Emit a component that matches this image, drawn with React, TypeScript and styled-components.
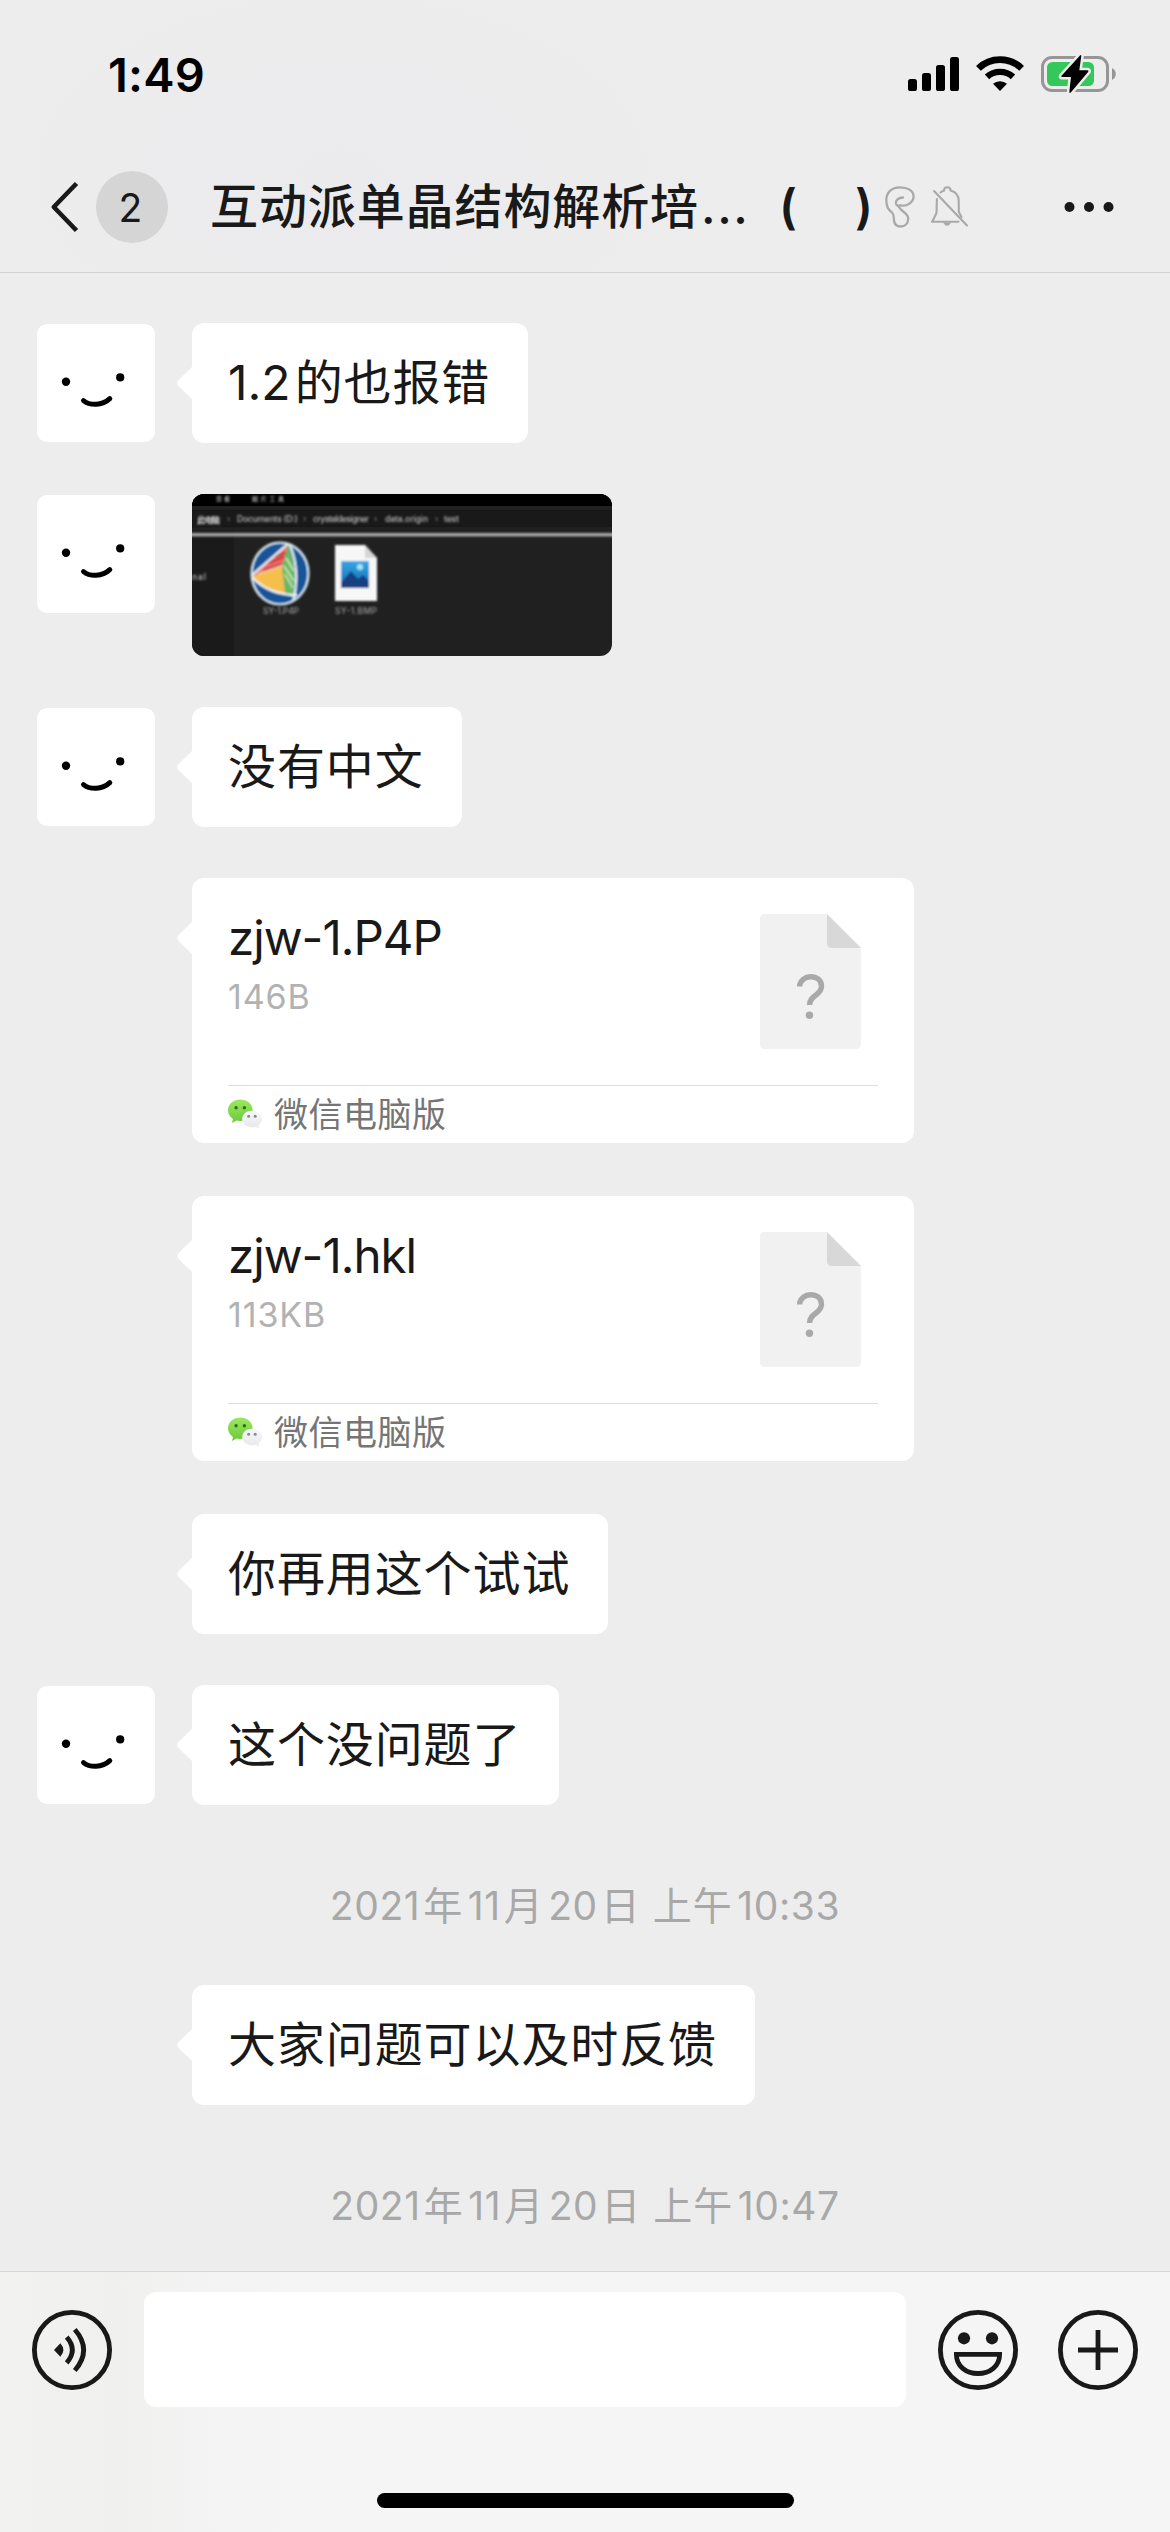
import React from "react";
import styled, { createGlobalStyle } from "styled-components";

const GlobalStyle = createGlobalStyle`
  * { box-sizing: border-box; }
  body {
    margin: 0;
    background: #ededed;
    font-family: Inter, "Noto Sans CJK SC", sans-serif;
    color: #191919;
  }
  svg { display: block; flex: none; }
`;

const Screen = styled.div`
  width: 1170px;
  height: 2532px;
  display: flex;
  flex-direction: column;
  overflow: hidden;
  background: #ededed;
`;

const Header = styled.header`
  height: 273px;
  flex: none;
  border-bottom: 1px solid #d3d3d3;
  background: radial-gradient(ellipse 420px 240px at 340px 170px, #ebebed 0%, #ededed 100%);
`;

const StatusBar = styled.div`
  height: 148px;
  display: flex;
  justify-content: space-between;
  padding: 0 54px 0 108px;
`;

const Clock = styled.span`
  padding-top: 46px;
  font-size: 47px;
  line-height: 58px;
  font-weight: 600;
  letter-spacing: 0.2px;
  color: #000;
`;

const StatusIcons = styled.div`
  display: flex;
  padding-top: 54px;
`;

const NavBar = styled.div`
  height: 118px;
  display: flex;
  align-items: center;
  padding: 0 56px 0 48px;
`;

const BackBadge = styled.span`
  width: 72px;
  height: 72px;
  margin-left: 16px;
  padding-right: 3px;
  border-radius: 50%;
  background: #d5d5d5;
  font-size: 39px;
  line-height: 73px;
  text-align: center;
`;

const Title = styled.h1`
  margin: 0 12px 0 42px;
  display: flex;
  font-size: 48px;
  line-height: 70px;
  font-weight: 500;
  white-space: pre;
`;

const TitlePart = styled.span<{ $width: number; $spacing?: number; $weight?: number }>`
  width: ${(p) => p.$width}px;
  letter-spacing: ${(p) => p.$spacing ?? 0.9}px;
  font-weight: ${(p) => p.$weight ?? 500};
  flex: none;
`;

const NavSpacer = styled.div`
  flex: 1;
`;

const Chat = styled.main`
  flex: 1;
  min-height: 0;
  display: flex;
  flex-direction: column;
  padding: 50px 36px 0;
`;

const Row = styled.div<{ $gap?: number }>`
  flex: none;
  display: flex;
  align-items: flex-start;
  margin-bottom: ${(p) => p.$gap ?? 51}px;
`;

const AvatarSlot = styled.div`
  width: 156px;
  flex: none;
  padding: 1px 0 0 1px;
`;

const AvatarBox = styled.div`
  width: 118px;
  height: 118px;
  border-radius: 10px;
  background: #fff;
`;

const Bubble = styled.div`
  position: relative;
  border-radius: 12px;
  background: #fff;
`;

const Tail = styled.svg`
  position: absolute;
  left: -15px;
  top: 42px;
`;

const TextBubble = styled(Bubble)`
  height: 120px;
  padding: 0 38px 0 36px;
  font-size: 48px;
  line-height: 119px;
  letter-spacing: 0.9px;
  white-space: nowrap;
`;

const Latin = styled.span<{ $spacing: number; $before: number; $after: number }>`
  letter-spacing: ${(p) => p.$spacing}px;
  margin-left: ${(p) => p.$before}px;
  margin-right: ${(p) => p.$after}px;
`;

const Picture = styled.div`
  width: 420px;
  height: 162px;
  border-radius: 12px;
  overflow: hidden;
`;

const FileCard = styled(Bubble)`
  width: 722px;
  height: 265px;
  padding: 0 36px;
`;

const FileTop = styled.div`
  height: 208px;
  display: flex;
  justify-content: space-between;
  padding: 31px 17px 0 0;
  border-bottom: 1px solid #dedede;
`;

const FileInfo = styled.div`
  display: flex;
  flex-direction: column;
`;

const FileName = styled.span`
  font-size: 47.5px;
  line-height: 58px;
  letter-spacing: -1px;
`;

const FileSize = styled.span`
  font-size: 34px;
  line-height: 42px;
  margin-top: 9px;
  letter-spacing: 0.9px;
  color: #b2b2b2;
`;

const FileIconBox = styled.div`
  padding-top: 5px;
`;

const FileSource = styled.div`
  height: 55px;
  display: flex;
  align-items: center;
  gap: 12px;
  font-size: 34px;
  letter-spacing: 0.5px;
  color: #757575;
`;

const SourceLabel = styled.span`
  line-height: 50px;
  padding-top: 3px;
`;

const DateLine = styled.div`
  height: 78px;
  flex: none;
  margin-bottom: 51px;
  text-align: center;
  font-size: 39px;
  line-height: 58px;
  padding: 21px 0 0 3px;
  letter-spacing: 1px;
  color: #a8a8a8;
  white-space: nowrap;
`;

const InputBar = styled.footer`
  height: 261px;
  flex: none;
  border-top: 1px solid #d6d6d6;
  background: linear-gradient(90deg, #f2f2f0 0, #f0f0ee 120px, #f3f3f3 190px, #f5f5f5 300px);
  display: flex;
  flex-direction: column;
  align-items: center;
`;

const InputRow = styled.div`
  width: 1170px;
  height: 115px;
  flex: none;
  margin-top: 20px;
  display: flex;
  align-items: center;
  padding: 0 32px;
`;

const InputField = styled.div`
  width: 762px;
  height: 115px;
  margin: 0 32px;
  border-radius: 12px;
  background: #fff;
`;

const IconGap = styled.div`
  width: 40px;
`;

const HomeIndicator = styled.div`
  width: 417px;
  height: 15px;
  margin-top: 86px;
  border-radius: 8px;
  background: #000;
`;

const SpacedSvg = styled.svg<{ $before: number }>`
  margin-left: ${(p) => p.$before}px;
`;

const SignalIcon = () => (
  <svg width="51" height="40" viewBox="0 0 51 40">
    <rect x="0" y="25" width="9" height="12" rx="2.6" />
    <rect x="14" y="19" width="9" height="18" rx="2.6" />
    <rect x="28" y="11" width="9" height="26" rx="2.6" />
    <rect x="42" y="3" width="9" height="34" rx="2.6" />
  </svg>
);

const WifiIcon = () => (
  <SpacedSvg $before={17} width="48" height="40" viewBox="0 0 48 40">
    <path d="M24 37 L17 29.8 A10.5 10.5 0 0 1 31 29.8 Z" />
    <path d="M11 22.8 A19.5 19.5 0 0 1 37 22.8" fill="none" stroke="#000" strokeWidth="6.4" />
    <path d="M2.4 14.4 A31 31 0 0 1 45.6 14.4" fill="none" stroke="#000" strokeWidth="6.8" />
  </SpacedSvg>
);

const BatteryIcon = () => (
  <SpacedSvg $before={17} width="75" height="40" viewBox="0 0 75 40">
    <rect x="1.5" y="3.5" width="65" height="33" rx="9.5" fill="none" stroke="#969696" strokeWidth="3" />
    <path d="M71 14 C76 16.5 76 23.5 71 26 Z" fill="#969696" />
    <rect x="6" y="8" width="47" height="24" rx="5.5" fill="#34c759" />
    <path
      d="M39 1.5 L20.5 21.8 Q19.8 23 21 23 L30 23 L28.3 38 Q28.6 39.6 30 38.3 L47.3 17.7 Q47.8 16.3 46.4 16.3 L38.3 16.3 L40.3 2 Q40.3 0.5 39 1.5 Z"
      stroke="#ededed"
      strokeWidth="5"
      paintOrder="stroke"
    />
  </SpacedSvg>
);

const BackIcon = () => (
  <svg width="32" height="56" viewBox="0 0 32 56" fill="none" stroke="#191919" strokeWidth="4.6">
    <path d="M28.5 4.5 L5.8 28 L28.5 51.5" strokeLinejoin="round" />
  </svg>
);

const EarIcon = () => (
  <svg width="30" height="42" viewBox="0 0 30 42" fill="none" stroke="#a9a9a9" strokeWidth="2.3" strokeLinecap="round">
    <path d="M18 11.5 C13 11.5 10.5 14.5 11 17.5 C11.5 20 13.5 20 15.5 19.3 C22 21 28.5 16 28.6 10.5 C28.5 4.5 22.5 1.3 15 1.3 C6.5 1.3 1.3 6.5 1.3 14 C1.3 22 4 24 7 26.5 C9.5 29 8.5 31 9 34.5 C9.5 38.5 12 40.5 15.5 40.5 C20 40.5 22.8 37.5 23.2 33 C23.5 27 17 26.5 13.5 20.5" />
  </svg>
);

const MuteIcon = () => (
  <SpacedSvg $before={16} width="38" height="42" viewBox="0 0 38 42" fill="none" stroke="#a9a9a9" strokeWidth="2.1" strokeLinecap="round">
    <path d="M3 5 L36 39.5" />
    <path d="M9.5 6.6 Q10.8 5.2 13 4.6 C13 2.4 14.2 1.3 16.3 1.3 C18.5 1.3 19.5 2.5 19.7 4.6 C24.5 6 27.5 9.5 27.7 14.5 L27.8 26 L30.5 31" />
    <path d="M5.9 13 L5.5 27 L1.2 35.7 L27.5 35.7" />
    <path d="M14.2 37.5 Q16 39.8 18 37.5 Z" fill="#a9a9a9" />
  </SpacedSvg>
);

const MoreIcon = () => (
  <svg width="50" height="14" viewBox="0 0 50 14" fill="#191919">
    <circle cx="5.5" cy="7" r="5" />
    <circle cx="25" cy="7" r="5" />
    <circle cx="44.5" cy="7" r="5" />
  </svg>
);

const Avatar = () => (
  <AvatarBox>
    <svg width="118" height="118" viewBox="0 0 118 118">
      <circle cx="29" cy="57.7" r="4.2" />
      <circle cx="83.2" cy="53.4" r="4.1" />
      <path d="M46.5 76.6 C53 81.8 65 82 72.8 74.6" fill="none" stroke="#000" strokeWidth="5" strokeLinecap="round" />
    </svg>
  </AvatarBox>
);

const BubbleTail = () => (
  <Tail width="16" height="36" viewBox="0 0 16 36">
    <path d="M16 0 Q15.5 2 12 5 L2 14.5 Q-1.4 18 2 21.5 L12 31 Q15.5 34 16 36 Z" fill="#fff" />
  </Tail>
);

const Screenshot = () => (
  <svg width="420" height="162" viewBox="0 0 420 162">
    <defs>
      <filter id="soft" x="-10%" y="-10%" width="120%" height="120%">
        <feGaussianBlur stdDeviation="0.8" />
      </filter>
      <linearGradient id="photo" x1="0" y1="0" x2="0" y2="1">
        <stop offset="0" stopColor="#33a8e4" />
        <stop offset="1" stopColor="#1666b4" />
      </linearGradient>
      <clipPath id="disc">
        <ellipse cx="88" cy="79.5" rx="28" ry="30.5" />
      </clipPath>
    </defs>
    <rect width="420" height="162" fill="#202020" />
    <rect y="38" width="42" height="124" fill="#1a1a1a" />
    <rect width="420" height="38" fill="#191919" />
    <rect width="420" height="12" fill="#000" />
    <g filter="url(#soft)">
      <rect x="-5" y="13" width="430" height="2" fill="#2b2b2b" />
      <rect x="-5" y="34" width="430" height="2" fill="#252525" />
      <rect x="-5" y="39" width="430" height="3.4" fill="#a9a9a9" />
      <g fill="#bcbcbc" fontSize="8.5" fontWeight="500" fontFamily='Inter, "Noto Sans CJK SC", sans-serif'>
        <text x="24" y="6.6" fontSize="6" textLength="14">查看</text>
        <text x="60" y="6.6" fontSize="6" textLength="32">图片工具</text>
        <text x="5" y="28.5" textLength="23" fill="#f0f0f0">此电脑</text>
        <text x="35" y="28" fill="#777">›</text>
        <text x="45" y="28" textLength="61">Documents (D:)</text>
        <text x="111" y="28" fill="#777">›</text>
        <text x="121" y="28" textLength="56">crystaldesigner</text>
        <text x="182" y="28" fill="#777">›</text>
        <text x="193" y="28" textLength="43">data.origin</text>
        <text x="243" y="28" fill="#777">›</text>
        <text x="252" y="28" textLength="15">test</text>
        <text x="0" y="86" textLength="14">nal</text>
        <text x="71" y="120" textLength="36" fill="#979797">SY-1.P4P</text>
        <text x="143" y="120" textLength="42" fill="#979797">SY-1.BMP</text>
      </g>
    </g>
    <g filter="url(#soft)">
      <ellipse cx="88" cy="79.5" rx="28.5" ry="31" fill="#12549a" stroke="#dbeef8" strokeWidth="2.2" />
      <g clipPath="url(#disc)">
        <path d="M60 82 L96 51 L92 71 Z" fill="#f1675f" />
        <path d="M60 82 L92 71 L95 100 Q77 100 60 82 Z" fill="#f6bf4b" />
        <path d="M96 51 Q106 75 101 101 L93 99 L90 73 Z" fill="#69b765" />
        <path d="M72 76 L90 70 M76 69 L92 63 M82 63 L94 59" stroke="#a92539" strokeWidth="1.5" />
        <path d="M94 64 L102 77 M92 72 L102 87 M93 80 L101 94" stroke="#d7edba" strokeWidth="1.5" />
        <path d="M59 82 L97 49 Q109 76 101 108 M59 82 Q76 101 105 101" fill="none" stroke="#eef7f8" strokeWidth="2.2" />
        <path d="M66 80 L91 71" stroke="#f8dccd" strokeWidth="1.2" />
      </g>
      <path d="M143 51 H173 L185 64 V107 H143 Z" fill="#f7f7f7" />
      <path d="M173 51 V64 H185 Z" fill="#d5d5d5" />
      <rect x="149" y="67" width="28" height="27" fill="url(#photo)" />
      <path d="M149 89 L159 77 L166 85 L171 81 L177 87 V94 H149 Z" fill="#123f80" />
      <circle cx="168" cy="73" r="3" fill="#a9e6f6" />
    </g>
  </svg>
);

const FileIcon = () => (
  <svg width="101" height="135" viewBox="0 0 101 135">
    <path d="M5 0 H67 L101 34 V130 Q101 135 96 135 H5 Q0 135 0 130 V5 Q0 0 5 0 Z" fill="#f1f1f1" />
    <path d="M67 0 L101 34 H72 Q67 34 67 29 Z" fill="#d8d8d8" />
    <path d="M39.6 72.5 C40 60 61.5 59 61.5 72.3 C61.5 82 49.6 80.5 49.6 91" fill="none" stroke="#a9a9a9" strokeWidth="5.4" />
    <circle cx="49.5" cy="101.2" r="3.7" fill="#a9a9a9" />
  </svg>
);

const WeChatIcon = () => (
  <svg width="34" height="30" viewBox="0 0 34 30">
    <defs>
      <linearGradient id="wxGreen" x1="0" y1="0" x2="0" y2="1">
        <stop offset="0" stopColor="#9be860" />
        <stop offset="1" stopColor="#6cc93a" />
      </linearGradient>
      <linearGradient id="wxWhite" x1="0" y1="0" x2="0" y2="1">
        <stop offset="0" stopColor="#f8f8fa" />
        <stop offset="1" stopColor="#e6e8ec" />
      </linearGradient>
    </defs>
    <path d="M12.3 0.5 C5.5 0.5 0 5 0 11.2 C0 15 2 18 5 20 L4 24 L8.6 21.6 Q10.4 22.1 12.3 22 C19 22 24.6 17.4 24.6 11.2 C24.6 5 19 0.5 12.3 0.5 Z" fill="url(#wxGreen)" />
    <path d="M24 11.8 C18.5 11.8 14.2 15.3 14.2 20 C14.2 24.8 18.5 28.2 24 28.2 Q26 28.2 27.6 27.7 L31 29.6 L30.3 26.5 C32.6 25 34 22.8 34 20 C34 15.3 29.5 11.8 24 11.8 Z" fill="url(#wxWhite)" />
    <circle cx="8.1" cy="8.7" r="1.7" fill="#2c6e1d" />
    <circle cx="16.4" cy="8.7" r="1.7" fill="#2c6e1d" />
    <circle cx="20.6" cy="17.2" r="1.5" fill="#858a90" />
    <circle cx="27.2" cy="17.2" r="1.5" fill="#858a90" />
  </svg>
);

const VoiceIcon = () => (
  <svg width="80" height="80" viewBox="0 0 80 80" fill="none" stroke="#191919" strokeWidth="4.8">
    <circle cx="40" cy="40" r="37.6" />
    <path d="M22 40 L28.3 33.3 Q34.5 40 28.3 46.7 Z" fill="#191919" stroke="none" />
    <path d="M34.7 27.2 Q46 40 34.7 52.8" />
    <path d="M42.8 19.5 Q60.5 40 42.8 60.5" />
  </svg>
);

const EmojiIcon = () => (
  <svg width="80" height="80" viewBox="0 0 80 80" fill="none" stroke="#191919" strokeWidth="4.8">
    <circle cx="40" cy="40" r="37.6" />
    <circle cx="26" cy="28.3" r="6.1" fill="#191919" stroke="none" />
    <circle cx="54" cy="28.3" r="6.1" fill="#191919" stroke="none" />
    <path d="M18.4 44.4 H61.6 C61.6 56 52 63.5 40 63.5 C28 63.5 18.4 56 18.4 44.4 Z" />
  </svg>
);

const PlusIcon = () => (
  <svg width="80" height="80" viewBox="0 0 80 80" fill="none" stroke="#191919" strokeWidth="4.8">
    <circle cx="40" cy="40" r="37.6" />
    <path d="M40 20 V60 M20 40 H60" />
  </svg>
);

const FileMessage = ({ name, size }: { name: string; size: string }) => (
  <Row $gap={53}>
    <AvatarSlot />
    <FileCard>
      <BubbleTail />
      <FileTop>
        <FileInfo>
          <FileName>{name}</FileName>
          <FileSize>{size}</FileSize>
        </FileInfo>
        <FileIconBox>
          <FileIcon />
        </FileIconBox>
      </FileTop>
      <FileSource>
        <WeChatIcon />
        <SourceLabel>微信电脑版</SourceLabel>
      </FileSource>
    </FileCard>
  </Row>
);

const TextMessage = ({ avatar, children }: { avatar?: boolean; children: React.ReactNode }) => (
  <Row>
    <AvatarSlot>{avatar && <Avatar />}</AvatarSlot>
    <TextBubble>
      <BubbleTail />
      {children}
    </TextBubble>
  </Row>
);

const Num = ({ children, first }: { children: string; first?: boolean }) => (
  <Latin $spacing={0.6} $before={first ? 0 : 4.5} $after={3}>
    {children}
  </Latin>
);

const DateStamp = ({ time }: { time: string }) => (
  <DateLine>
    <Num first>2021</Num>年<Num>11</Num>月<Num>20</Num>日 上午<Num>{time}</Num>
  </DateLine>
);

export default function App() {
  return (
    <>
      <GlobalStyle />
      <Screen>
        <Header>
          <StatusBar>
            <Clock>1:49</Clock>
            <StatusIcons>
              <SignalIcon />
              <WifiIcon />
              <BatteryIcon />
            </StatusIcons>
          </StatusBar>
          <NavBar>
            <BackIcon />
            <BackBadge>2</BackBadge>
            <Title>
              <TitlePart $width={491}>互动派单晶结构解析培</TitlePart>
              <TitlePart $width={78} $spacing={1.6}>...</TitlePart>
              <TitlePart $width={76} $weight={600}>(</TitlePart>
              <TitlePart $width={18} $weight={600}>)</TitlePart>
            </Title>
            <EarIcon />
            <MuteIcon />
            <NavSpacer />
            <MoreIcon />
          </NavBar>
        </Header>
        <Chat>
          <TextMessage avatar>
            <Latin $spacing={0} $before={0} $after={4}>1.2</Latin>的也报错
          </TextMessage>
          <Row>
            <AvatarSlot>
              <Avatar />
            </AvatarSlot>
            <Picture>
              <Screenshot />
            </Picture>
          </Row>
          <TextMessage avatar>没有中文</TextMessage>
          <FileMessage name="zjw-1.P4P" size="146B" />
          <FileMessage name="zjw-1.hkl" size="113KB" />
          <TextMessage>你再用这个试试</TextMessage>
          <TextMessage avatar>这个没问题了</TextMessage>
          <DateStamp time="10:33" />
          <TextMessage>大家问题可以及时反馈</TextMessage>
          <DateStamp time="10:47" />
        </Chat>
        <InputBar>
          <InputRow>
            <VoiceIcon />
            <InputField />
            <EmojiIcon />
            <IconGap />
            <PlusIcon />
          </InputRow>
          <HomeIndicator />
        </InputBar>
      </Screen>
    </>
  );
}
